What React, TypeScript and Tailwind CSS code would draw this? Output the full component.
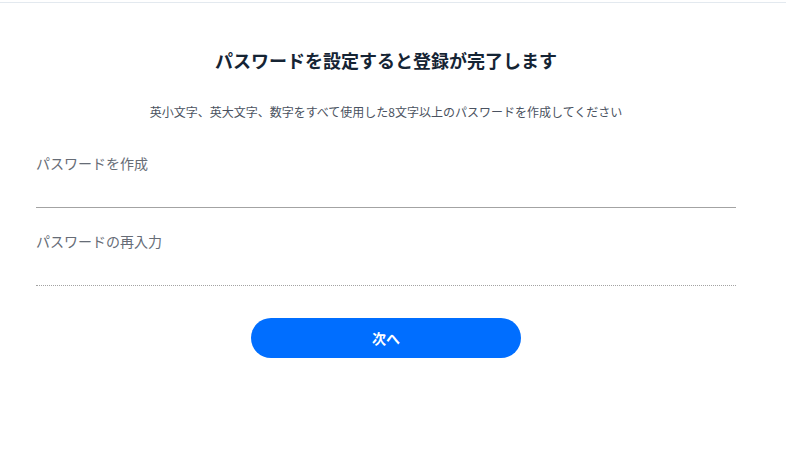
export default function App() {
  return (
    <div
      className="min-h-screen bg-white pt-[2px]"
      style={{ fontFamily: '"Noto Sans CJK JP", "Noto Sans", sans-serif' }}
    >
      <div className="border-t border-[#e3e9ef]" />
      <div className="ml-[36px] w-[700px]">
        <h1 className="mt-[44px] text-center text-[18px] font-bold leading-[26px] text-[#152434]">
          パスワードを設定すると登録が完了します
        </h1>
        <p className="mt-[30px] text-center text-[12px] leading-[18px] text-[#4a5260]">
          英小文字、英大文字、数字をすべて使用した8文字以上のパスワードを作成してください
        </p>

        <label className="mt-[32px] block">
          <span className="block text-[14px] leading-[20px] text-[#666c76]">
            パスワードを作成
          </span>
          <input
            type="password"
            className="block h-[35px] w-full border-b border-solid border-[#a3a3a3] outline-none"
          />
        </label>

        <label className="mt-[23px] block">
          <span className="block text-[14px] leading-[20px] text-[#666c76]">
            パスワードの再入力
          </span>
          <input
            type="password"
            className="block h-[35px] w-full border-b border-dotted border-[#a3a3a3] outline-none"
          />
        </label>

        <div className="mt-[32px] flex justify-center">
          <button className="h-[40px] w-[270px] rounded-full bg-[#006eff] text-[14px] font-bold text-white">
            次へ
          </button>
        </div>
      </div>
    </div>
  );
}
